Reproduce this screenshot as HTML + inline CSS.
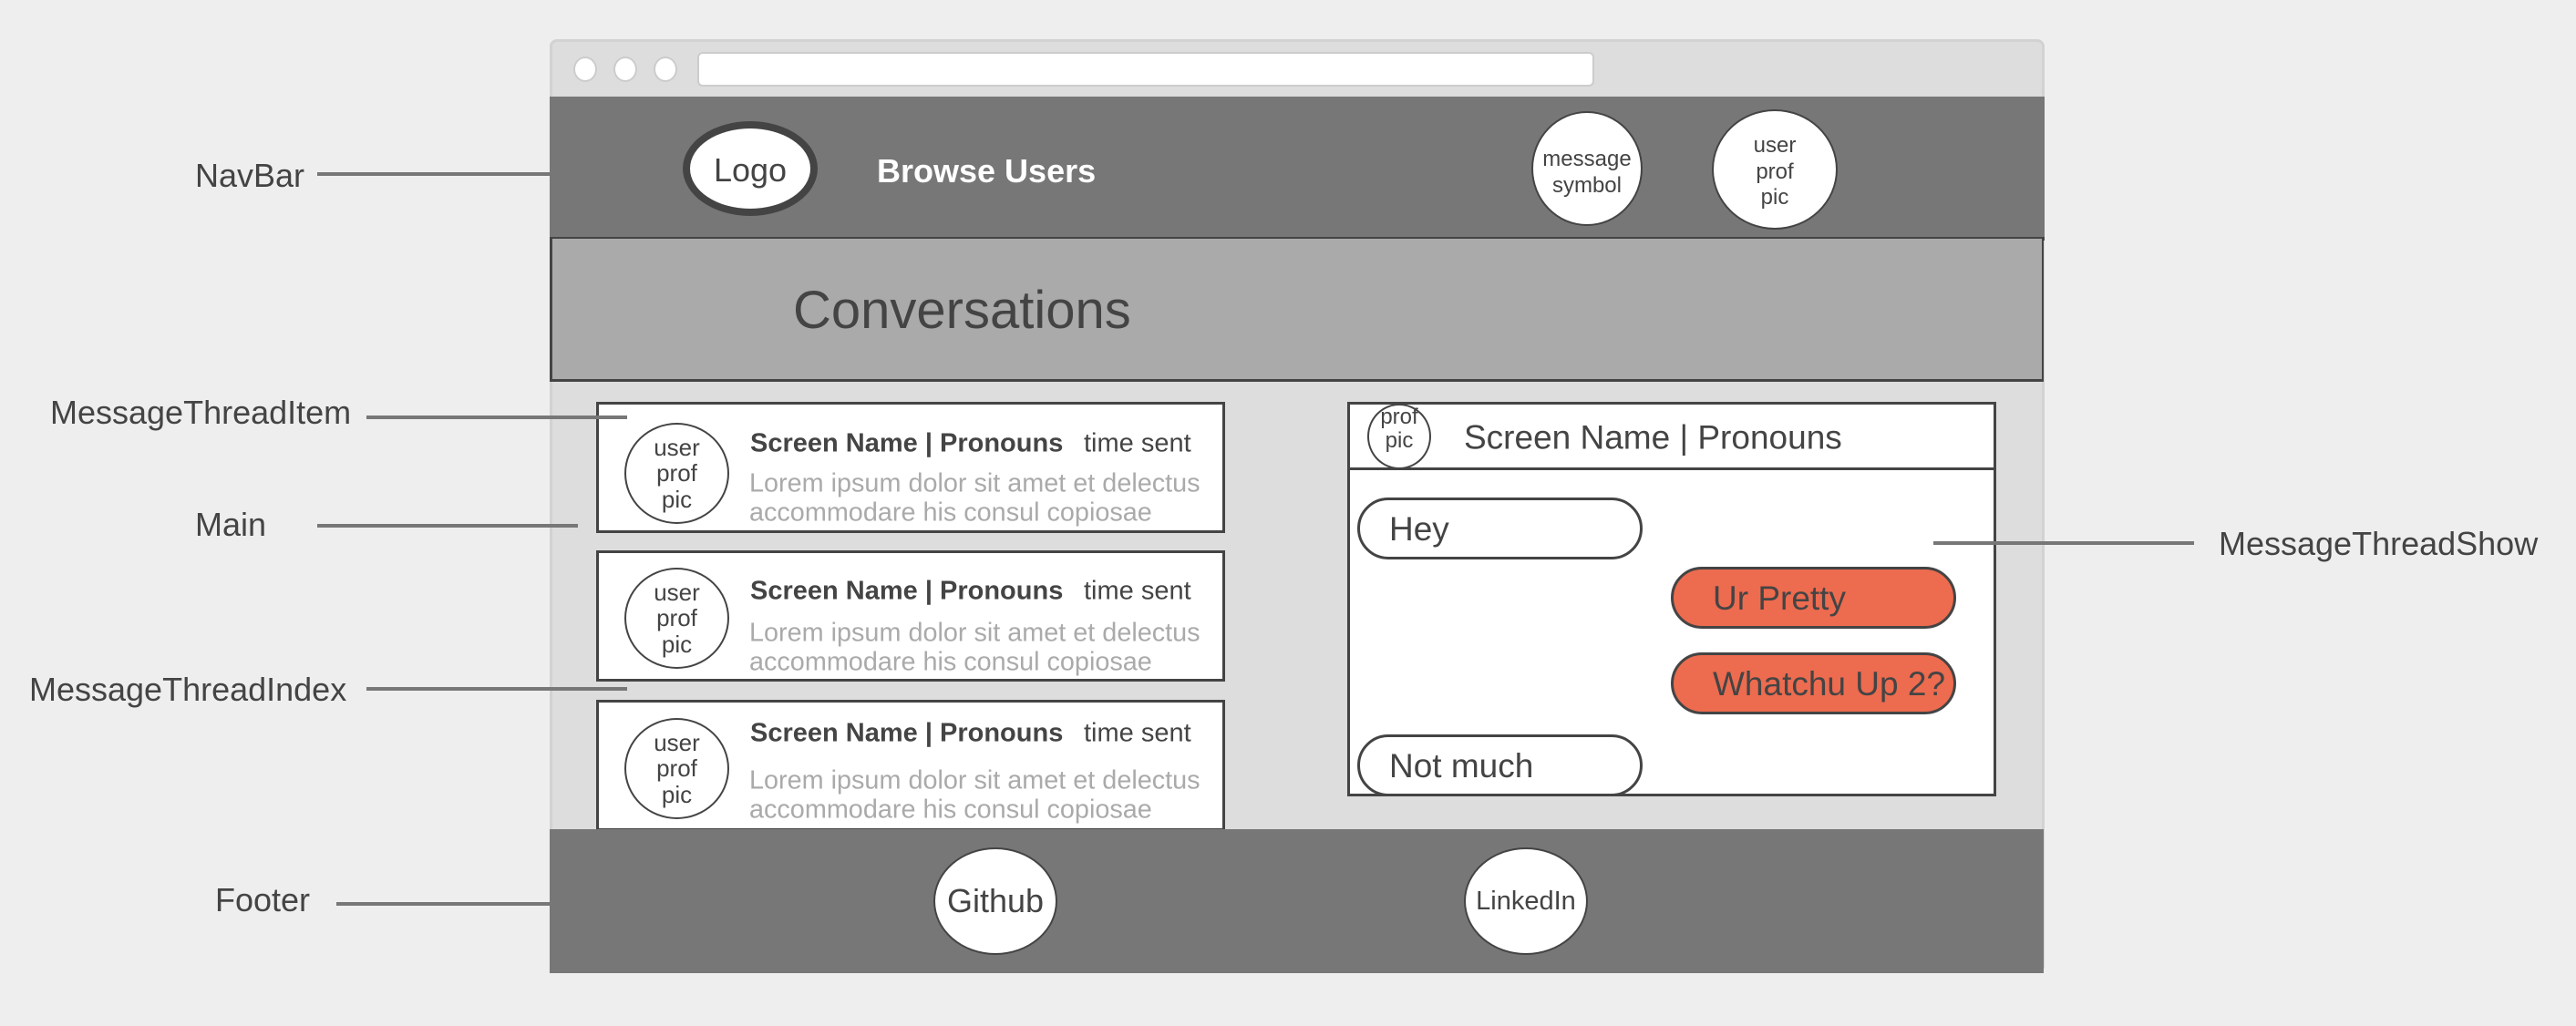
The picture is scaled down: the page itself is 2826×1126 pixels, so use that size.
<!DOCTYPE html>
<html><head><meta charset="utf-8"><style>
*{margin:0;padding:0;box-sizing:border-box}
body{width:2826px;height:1126px;background:#eeeeee;position:relative;overflow:hidden;font-family:"Liberation Sans",sans-serif;color:#444}
.a{position:absolute}
.lbl{position:absolute;font-size:36px;color:#444;line-height:1;transform:translateY(-50%);white-space:nowrap}
.ln{position:absolute;height:4px;background:#777}
.ell{position:absolute;border-radius:50%;background:#fff;border:2px solid #444;display:flex;align-items:center;justify-content:center;text-align:center;color:#444;line-height:1.2}
.item{position:absolute;left:654px;width:690px;background:#fff;border:3px solid #444}
.t{position:absolute;white-space:nowrap;line-height:1;transform:translateY(-50%)}
.bub{position:absolute;border:3px solid #444;border-radius:34px;font-size:37px;line-height:1;display:flex;align-items:center;padding-left:32px}
</style></head><body>
<div class="a" style="left:603px;top:43px;width:1640px;height:1025px;background:#ddd;border:3px solid #d2d2d2;border-radius:8px"></div>
<div class="a" style="left:629px;top:62px;width:26px;height:28px;border-radius:50%;background:#fff;border:2px solid #ccc"></div>
<div class="a" style="left:673px;top:62px;width:26px;height:28px;border-radius:50%;background:#fff;border:2px solid #ccc"></div>
<div class="a" style="left:717px;top:62px;width:26px;height:28px;border-radius:50%;background:#fff;border:2px solid #ccc"></div>
<div class="a" style="left:765px;top:57px;width:984px;height:38px;background:#fff;border:2px solid #ccc;border-radius:6px"></div>
<div class="a" style="left:603px;top:106px;width:1640px;height:158px;background:#777;border-bottom:4px solid #444"></div>
<div class="ell" style="left:749px;top:133px;width:148px;height:104px;border:8px solid #444;font-size:36px;padding-top:4px">Logo</div>
<div class="t" style="left:962px;top:188px;font-size:36px;font-weight:bold;color:#fff">Browse Users</div>
<div class="ell" style="left:1680px;top:122px;width:122px;height:126px;font-size:24px;padding-top:10px">message<br>symbol</div>
<div class="ell" style="left:1878px;top:120px;width:138px;height:132px;font-size:24px;padding-top:6px">user<br>prof<br>pic</div>
<div class="a" style="left:603px;top:262px;width:1639px;height:157px;background:#aaa;border:3px solid #444;border-top:none;border-right:2px solid #444"></div>
<div class="t" style="left:870px;top:341px;font-size:58px;color:#444">Conversations</div>
<div class="item" style="top:441px;height:144px"></div>
<div class="item" style="top:604px;height:144px"></div>
<div class="item" style="top:768px;height:144px"></div>
<div class="ell" style="left:685px;top:464px;width:115px;height:111px;font-size:26px;line-height:1.08">user<br>prof<br>pic</div>
<div class="ell" style="left:685px;top:623px;width:115px;height:111px;font-size:26px;line-height:1.08">user<br>prof<br>pic</div>
<div class="ell" style="left:685px;top:788px;width:115px;height:111px;font-size:26px;line-height:1.08">user<br>prof<br>pic</div>
<div class="t" style="left:823px;top:487px;font-size:29px;font-weight:bold">Screen Name | Pronouns</div>
<div class="t" style="left:1189px;top:487px;font-size:29px">time sent</div>
<div class="t" style="left:822px;top:531px;font-size:28.8px;color:#aaa">Lorem ipsum dolor sit amet et delectus</div>
<div class="t" style="left:822px;top:563px;font-size:28.8px;color:#aaa">accommodare his consul copiosae</div>
<div class="t" style="left:823px;top:649px;font-size:29px;font-weight:bold">Screen Name | Pronouns</div>
<div class="t" style="left:1189px;top:649px;font-size:29px">time sent</div>
<div class="t" style="left:822px;top:695px;font-size:28.8px;color:#aaa">Lorem ipsum dolor sit amet et delectus</div>
<div class="t" style="left:822px;top:727px;font-size:28.8px;color:#aaa">accommodare his consul copiosae</div>
<div class="t" style="left:823px;top:805px;font-size:29px;font-weight:bold">Screen Name | Pronouns</div>
<div class="t" style="left:1189px;top:805px;font-size:29px">time sent</div>
<div class="t" style="left:822px;top:857px;font-size:28.8px;color:#aaa">Lorem ipsum dolor sit amet et delectus</div>
<div class="t" style="left:822px;top:889px;font-size:28.8px;color:#aaa">accommodare his consul copiosae</div>
<div class="a" style="left:1478px;top:441px;width:712px;height:433px;background:#fff;border:3px solid #444"></div>
<div class="a" style="left:1478px;top:513px;width:712px;height:3px;background:#444"></div>
<div class="ell" style="left:1500px;top:443px;width:70px;height:72px;font-size:24px;line-height:1.1;align-items:flex-start">prof<br>pic</div>
<div class="t" style="left:1606px;top:480px;font-size:37px">Screen Name | Pronouns</div>
<div class="bub" style="left:1489px;top:546px;width:313px;height:68px;background:#fff">Hey</div>
<div class="bub" style="left:1833px;top:622px;width:313px;height:68px;background:#ed6b4f;padding-left:43px">Ur Pretty</div>
<div class="bub" style="left:1833px;top:716px;width:313px;height:68px;background:#ed6b4f;padding-left:43px">Whatchu Up 2?</div>
<div class="bub" style="left:1489px;top:806px;width:313px;height:68px;background:#fff">Not much</div>
<div class="a" style="left:603px;top:910px;width:1639px;height:158px;background:#777"></div>
<div class="ell" style="left:1024px;top:930px;width:136px;height:118px;font-size:36px">Github</div>
<div class="ell" style="left:1606px;top:930px;width:136px;height:118px;font-size:29px">LinkedIn</div>
<div class="lbl" style="left:214px;top:193px">NavBar</div>
<div class="ln" style="left:348px;top:189px;width:256px"></div>
<div class="lbl" style="left:55px;top:453px">MessageThreadItem</div>
<div class="ln" style="left:402px;top:456px;width:286px"></div>
<div class="lbl" style="left:214px;top:576px">Main</div>
<div class="ln" style="left:348px;top:575px;width:286px"></div>
<div class="lbl" style="left:32px;top:757px">MessageThreadIndex</div>
<div class="ln" style="left:402px;top:754px;width:286px"></div>
<div class="lbl" style="left:236px;top:988px">Footer</div>
<div class="ln" style="left:369px;top:990px;width:235px"></div>
<div class="lbl" style="left:2434px;top:597px">MessageThreadShow</div>
<div class="ln" style="left:2121px;top:594px;width:286px"></div>
</body></html>
